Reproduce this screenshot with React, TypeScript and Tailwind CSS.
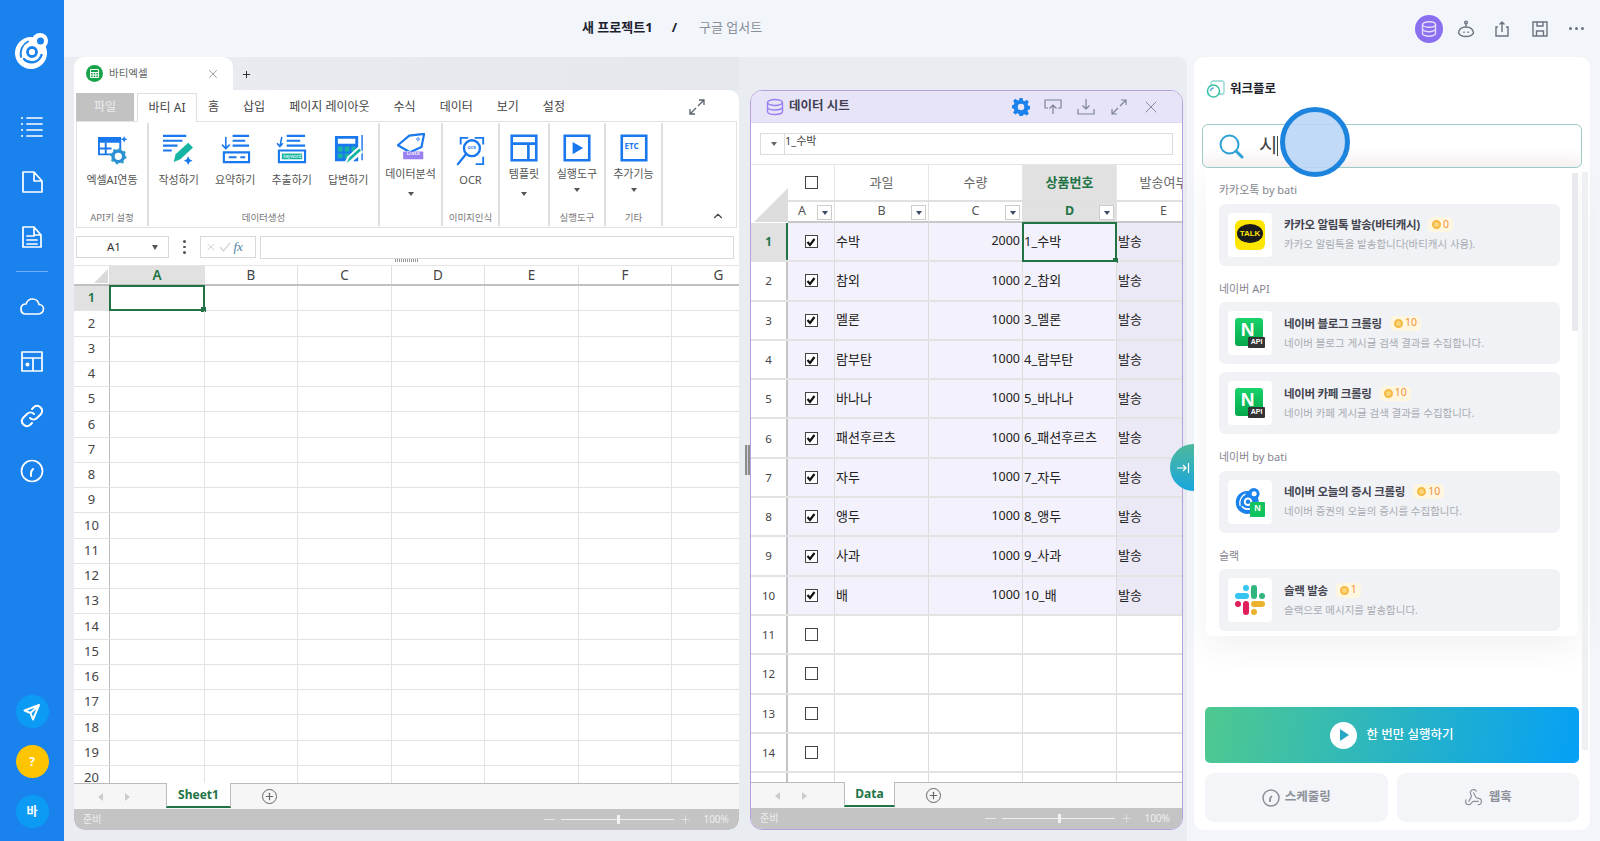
import { ChevronUp, Plus, Webhook, X } from "lucide-react";

const FONT = "font-['Noto_Sans','Noto_Sans_CJK_KR',sans-serif]";

function Logo() {
	return (
		<svg width="36" height="38" viewBox="0 0 36 38" fill="none">
			<circle cx="17" cy="21" r="16" fill="#fff" />
			<circle cx="26" cy="9" r="8" fill="#fff" />
			<circle cx="26.500" cy="9" r="3.500" fill="#1a82ec" />
			<path d="M7 25C5.500 18 9 12 14 9.500" stroke="#1a82ec" strokeWidth="1.800" strokeLinecap="round" />
			<path d="M10 27c5 5.500 15 4 17.500-4" stroke="#1a82ec" strokeWidth="2.400" strokeLinecap="round" />
			<circle cx="18" cy="20" r="4.500" stroke="#1a82ec" strokeWidth="2.800" />
		</svg>
	);
}

function SideIcon({ name }: { name: string }) {
	const p = { width: 26, height: 26, viewBox: "0 0 26 26", fill: "none", stroke: "#fff", strokeWidth: 1.7, strokeLinecap: "round" as const, strokeLinejoin: "round" as const };
	if (name === "list")
		return (
			<svg {...p}>
				<path d="M8 4h15M8 10h15M8 16h15M8 22h15" />
				<path d="M3 4h.1M3 10h.1M3 16h.1M3 22h.1" strokeWidth="2" />
			</svg>
		);
	if (name === "file")
		return (
			<svg {...p}>
				<path d="M4 3h11l8 9v11H4zM15 3v9h8" />
			</svg>
		);
	if (name === "doc")
		return (
			<svg {...p}>
				<path d="M4 3h11l7 8v12H4zM15 3v8h7M8 12h7M8 16h10M8 20h10" />
			</svg>
		);
	if (name === "cloud")
		return (
			<svg {...p}>
				<path d="M7 21c-3 0-5-2-5-5s2-5 5-5c1-3 3.500-5 6.500-5 3.500 0 6 2.500 6.500 5.500 2.500 0 4.500 2 4.500 4.500s-2 5-5 5z" />
			</svg>
		);
	if (name === "layout")
		return (
			<svg {...p}>
				<path d="M3 4h20v19H3zM3 10h20M14 10v13" />
				<circle cx="8.500" cy="16.500" r="1.200" fill="#fff" />
			</svg>
		);
	if (name === "link")
		return (
			<svg {...p} strokeWidth="2">
				<path d="M11 15a5 5 0 0 0 7 0l4-4a5 5 0 0 0-7-7l-2 2" />
				<path d="M15 11a5 5 0 0 0-7 0l-4 4a5 5 0 0 0 7 7l2-2" />
			</svg>
		);
	return (
		<svg {...p}>
			<circle cx="13" cy="13" r="10.500" />
			<path d="M12 18v-3c0-2 1-3 2-4" strokeWidth="2" />
		</svg>
	);
}

function Sidebar() {
	return (
		<aside className="flex h-full w-[64px] shrink-0 flex-col items-center bg-[#1a82ec]">
			<div className="mt-[32px]">
				<Logo />
			</div>
			<div className="mt-[44px] flex flex-col items-center gap-[29px]">
				<SideIcon name="list" />
				<SideIcon name="file" />
				<SideIcon name="doc" />
			</div>
			<div className="mt-[21px] h-px w-[32px] bg-[#6db0f3]" />
			<div className="mt-[21px] flex flex-col items-center gap-[29px]">
				<SideIcon name="cloud" />
				<SideIcon name="layout" />
				<SideIcon name="link" />
				<SideIcon name="gauge" />
			</div>
			<div className="mt-auto mb-[13px] flex flex-col items-center gap-[17px]">
				<div className="flex h-[33px] w-[33px] items-center justify-center rounded-full bg-[#0b9bf5]">
					<svg width="18" height="18" viewBox="0 0 18 18" fill="none" stroke="#fff" strokeWidth="2" strokeLinejoin="round">
						<path d="M16 2 1.500 7.500l6 2.500 2.500 6.500zM7.500 10 16 2" />
					</svg>
				</div>
				<div className="flex h-[33px] w-[33px] items-center justify-center rounded-full bg-[#ffc400] text-[12px] font-bold text-white">?</div>
				<div className="flex h-[33px] w-[33px] items-center justify-center rounded-full bg-[#0b9bf5] text-[12px] font-bold text-white">바</div>
			</div>
		</aside>
	);
}

function TopBar() {
	const stroke = "#6b7280";
	return (
		<header className="flex h-[57px] shrink-0 items-center bg-[#f2f5f9] pl-[518px]">
			<span className="mt-[-2px] text-[13px] font-bold text-[#1c2130]">새 프로젝트1</span>
			<span className="mt-[-2px] ml-[19px] text-[13px] font-bold text-[#1c2130]">/</span>
			<span className="mt-[-2px] ml-[22px] text-[13px] text-[#8a8f99]">구글 업서트</span>
			<div className="ml-[653px] flex items-center">
				<div className="flex h-[28px] w-[28px] items-center justify-center rounded-full bg-[#8a6ff0]">
					<svg width="18" height="18" viewBox="0 0 18 18" fill="none" stroke="#e6defc" strokeWidth="1.400">
						<ellipse cx="9" cy="4.500" rx="6.500" ry="2.800" />
						<path d="M2.500 4.500v9c0 1.500 3 2.800 6.500 2.800s6.500-1.300 6.500-2.800v-9M2.500 9c0 1.500 3 2.800 6.500 2.800s6.500-1.300 6.500-2.800" />
					</svg>
				</div>
				<svg className="ml-[14px]" width="18" height="18" viewBox="0 0 18 18" fill="none" stroke={stroke} strokeWidth="1.400">
					<circle cx="9" cy="2.500" r="1.300" />
					<path d="M9 4v3M1.500 13C2 9 5 7 9 7s7 2 7.500 6c-1 2-4 3.500-7.500 3.500S2.500 15 1.500 13z" />
					<path d="M7 11.500v1.500M11 11.500v1.500" />
				</svg>
				<svg className="ml-[18px]" width="18" height="18" viewBox="0 0 18 18" fill="none" stroke={stroke} strokeWidth="1.400">
					<path d="M5 7H3v9h12V7h-2M9 12V2M6.500 4.500 9 2l2.500 2.500" />
				</svg>
				<svg className="ml-[20px]" width="18" height="18" viewBox="0 0 18 18" fill="none" stroke={stroke} strokeWidth="1.400">
					<path d="M2 2h14v14H2zM6 2v4h6V2M5.500 16v-5h7v5" />
				</svg>
				<div className="ml-[20px] flex gap-[3px]">
					<span className="h-[3px] w-[3px] rounded-full bg-[#6b7280]" />
					<span className="h-[3px] w-[3px] rounded-full bg-[#6b7280]" />
					<span className="h-[3px] w-[3px] rounded-full bg-[#6b7280]" />
				</div>
			</div>
		</header>
	);
}

/* ---- ribbon ---- */
const B = "#1a78ee";
const T = "#16b5a3";

function RibbonIcon({ name, size }: { name: string; size: number }) {
	const p = { width: size, height: size, viewBox: "0 0 32 32", fill: "none" };
	switch (name) {
		case "link":
			return (
				<svg {...p}>
					<path d="M2 4h22v17H2z" stroke={B} strokeWidth="2" />
					<path d="M2 4h22v5H2z" fill={B} />
					<path d="M2 15h13M9 9v12" stroke={B} strokeWidth="2" />
					<circle cx="22" cy="23" r="5.500" stroke="#2c8fd6" strokeWidth="3.500" fill="#fff" />
					<circle cx="22" cy="23" r="7.500" stroke="#2c9fc6" strokeWidth="2" strokeDasharray="2.500 3.400" />
					<path d="M28 2l1 2.500 2.500 1-2.500 1-1 2.500-1-2.500-2.500-1 2.500-1z" fill={B} />
				</svg>
			);
		case "write":
			return (
				<svg {...p}>
					<path d="M0 2h24M0 7h20M0 12h15M0 17h9" stroke={B} strokeWidth="2.200" />
					<path d="M11 29l2-8 13-12 5 5-13 12z" fill={T} />
					<path d="M26 23l1.500 3 3 1.500-3 1.500-1.500 3-1.500-3-3-1.500 3-1.500z" fill={B} />
				</svg>
			);
		case "summary":
			return (
				<svg {...p}>
					<path d="M13 2h17M13 7h13M13 12h17" stroke={B} strokeWidth="2.200" />
					<path d="M6 3v12M2 11l4 4 4-4" stroke={B} strokeWidth="1.600" />
					<path d="M4 19h26v10H4z" stroke={B} strokeWidth="2.200" />
					<path d="M9 24h8M21 24h5" stroke={B} strokeWidth="2.200" />
				</svg>
			);
		case "extract":
			return (
				<svg {...p}>
					<path d="M11 2h19M11 7h14M11 12h19" stroke={B} strokeWidth="2.200" />
					<path d="M6 3 4 13M1 9.500l3 3.500 3-3.500" stroke={B} strokeWidth="1.600" />
					<path d="M3 17h27v12H3z" stroke={B} strokeWidth="2.200" />
					<path d="M6 20h21v6H6z" fill={T} />
				</svg>
			);
		case "answer":
			return (
				<svg {...p}>
					<path d="M2 2h24v26H2z" fill={B} />
					<path d="M5 5h18v5H5z" fill="#fff" />
					<path d="M5 13h5v5H5zM12 13h5v5h-5zM19 13h4v5h-4zM5 20h5v5H5zM12 20h5v5h-5z" fill={T} />
					<path d="M30 1v26" stroke={B} strokeWidth="1.500" />
					<path d="M13 30l3-6 10-9 3.500 3.500-10 9z" fill="#fff" stroke="#fff" strokeWidth="2.500" />
					<path d="M14 30l3-6 10-9 2 2-10 9z" fill={T} />
				</svg>
			);
		case "tag":
			return (
				<svg {...p}>
					<path d="M1 14 14 3l17-2-3 15-13 6z" stroke={B} strokeWidth="2.500" strokeLinejoin="round" />
					<circle cx="24" cy="7" r="1.500" stroke={B} />
					<rect x="7" y="21" width="23" height="9" rx="1" fill="#9a7ff0" />
				</svg>
			);
		case "ocr":
			return (
				<svg {...p}>
					<path d="M5 9V2h8M20 2h9v7M29 22v8h-8" stroke={B} strokeWidth="2" />
					<circle cx="17" cy="13" r="8.500" stroke={B} strokeWidth="2.500" />
					<path d="M11 19 2 30" stroke={B} strokeWidth="2.500" strokeLinecap="round" />
				</svg>
			);
		case "template":
			return (
				<svg {...p}>
					<path d="M2 2h28v28H2zM2 11h28M21 11v19" stroke={B} strokeWidth="3" />
				</svg>
			);
		case "run":
			return (
				<svg {...p}>
					<path d="M2 2h28v28H2z" stroke={B} strokeWidth="3" />
					<path d="M11 9v14l12-7z" fill={B} />
				</svg>
			);
		default:
			return (
				<svg {...p}>
					<path d="M2 2h28v28H2z" stroke={B} strokeWidth="3" />
				</svg>
			);
	}
}

function RibbonButton({ icon, label, caret, pad = "pt-[11px]", size = 31, textGap = "mt-[7px]", caretGap = "mt-[4px]", width = "w-[56.5px]" }: { icon: string; label: string; caret?: boolean; pad?: string; size?: number; textGap?: string; caretGap?: string; width?: string }) {
	return (
		<div className={`relative flex flex-col items-center ${width} ${pad}`}>
			<div className="relative">
				<RibbonIcon name={icon} size={size} />
				{icon === "ocr" && <span className="absolute top-[9px] left-[12px] text-[4px] font-bold text-[#1a78ee]">OCR</span>}
				{icon === "tag" && <span className="absolute top-[15px] left-[10px] text-[6px] leading-[10px] text-white">Data</span>}
				{icon === "extract" && <span className="absolute top-[18px] left-[7px] text-[4.500px] leading-[8px] text-white">keyword</span>}
				{icon === "etc" && <span className="absolute top-[6px] left-[5px] text-[8px] font-bold text-[#1a78ee]">ETC</span>}
			</div>
			<span className={`whitespace-nowrap text-[11px] text-[#555] ${textGap}`}>{label}</span>
			{caret && <span className={`h-0 w-0 border-x-[3px] border-t-[4px] border-x-transparent border-t-[#555] ${caretGap}`} />}
		</div>
	);
}

function RibbonGroup({ label, width, children }: { label?: string; width: string; children: React.ReactNode }) {
	return (
		<div className={`relative flex h-full shrink-0 flex-col border-r-2 border-[#dedede] ${width}`}>
			<div className="flex flex-1 justify-center">{children}</div>
			<div className="h-[16px] text-center text-[9.500px] leading-[16px] text-[#777]">{label}</div>
		</div>
	);
}

function Ribbon() {
	return (
		<>
			<div className="flex h-[31px] shrink-0 items-end pl-[2px] text-[12px] text-[#444]">
				<div className="flex h-[28px] w-[58px] items-center justify-center bg-[#c2c2c2] text-[#eee]">파일</div>
				<div className="z-10 ml-[3px] flex h-[29px] w-[60px] translate-y-px items-center justify-center border-x border-t border-[#dedede] bg-white">바티 AI</div>
				<span className="mb-[5px] ml-[11px]">홈</span>
				<span className="mb-[5px] ml-[24px]">삽입</span>
				<span className="mb-[5px] ml-[24px]">페이지 레이아웃</span>
				<span className="mb-[5px] ml-[24px]">수식</span>
				<span className="mb-[5px] ml-[24px]">데이터</span>
				<span className="mb-[5px] ml-[24px]">보기</span>
				<span className="mb-[5px] ml-[24px]">설정</span>
				<svg className="mb-[6px] ml-[124px]" width="16" height="16" viewBox="0 0 16 16" fill="none" stroke="#5b6370" strokeWidth="1.300">
					<path d="M9 7l6-6M10 1h5v5M7 9l-6 6M1 10v5h5" />
				</svg>
			</div>
			<div className="relative mx-[2px] flex h-[107px] shrink-0 border border-[#e2e2e2] pt-px pb-px">
				<RibbonGroup label="API키 설정" width="w-[72px]">
					<RibbonButton icon="link" label="엑셀AI연동" width="w-[72px]" />
				</RibbonGroup>
				<RibbonGroup label="데이터생성" width="w-[231px]">
					<RibbonButton icon="write" label="작성하기" />
					<RibbonButton icon="summary" label="요약하기" />
					<RibbonButton icon="extract" label="추출하기" />
					<RibbonButton icon="answer" label="답변하기" />
				</RibbonGroup>
				<RibbonGroup width="w-[63px]">
					<RibbonButton icon="tag" label="데이터분석" caret pad="pt-[10px]" size={28} textGap="mt-[5px]" caretGap="mt-[9px]" width="w-[60px]" />
				</RibbonGroup>
				<RibbonGroup label="이미지인식" width="w-[57px]">
					<RibbonButton icon="ocr" label="OCR" pad="pt-[13px]" size={30} textGap="mt-[6px]" width="w-[57px]" />
				</RibbonGroup>
				<RibbonGroup width="w-[50px]">
					<RibbonButton icon="template" label="템플릿" caret pad="pt-[11px]" size={28} textGap="mt-[4px]" caretGap="mt-[9px]" width="w-[50px]" />
				</RibbonGroup>
				<RibbonGroup label="실행도구" width="w-[56px]">
					<RibbonButton icon="run" label="실행도구" caret pad="pt-[11px]" size={28} textGap="mt-[4px]" caretGap="mt-[5px]" width="w-[56px]" />
				</RibbonGroup>
				<RibbonGroup label="기타" width="w-[57px]">
					<RibbonButton icon="etc" label="추가기능" caret pad="pt-[11px]" size={28} textGap="mt-[4px]" caretGap="mt-[5px]" width="w-[57px]" />
				</RibbonGroup>
				<ChevronUp className="absolute right-[11px] bottom-[4px] text-[#444]" size={14} />
			</div>
		</>
	);
}

function FormulaBar() {
	return (
		<div className="relative flex h-[37px] shrink-0 items-center pl-[2px] pt-[1px]">
			<div className="flex h-[22px] w-[93px] items-center border border-[#d9d9d9] pl-[30px] text-[11.500px] text-[#333]">
				A1
				<span className="ml-[31px] h-0 w-0 border-x-[3.500px] border-t-[5px] border-x-transparent border-t-[#555]" />
			</div>
			<div className="ml-[14px] flex flex-col gap-[3px]">
				<span className="h-[2.500px] w-[2.500px] rounded-full bg-[#555]" />
				<span className="h-[2.500px] w-[2.500px] rounded-full bg-[#555]" />
				<span className="h-[2.500px] w-[2.500px] rounded-full bg-[#555]" />
			</div>
			<div className="ml-[14px] flex h-[22px] w-[56px] items-center border border-[#d9d9d9] pl-[4px] text-[#d4d4d4]">
				<X size={12} />
				<svg className="ml-[2px]" width="12" height="12" viewBox="0 0 12 12" fill="none" stroke="#d4d4d4" strokeWidth="1.200">
					<path d="M1 6l3.500 4L11 2" />
				</svg>
				<i className="ml-[3px] font-['Liberation_Serif',serif] text-[13px] text-[#4f7f9f]">fx</i>
			</div>
			<div className="ml-[4px] h-[23px] w-[474px] border border-[#d9d9d9]" />
			<div className="absolute bottom-[3px] left-[321px] h-[3px] w-[23px] bg-[repeating-linear-gradient(90deg,#999_0,#999_1px,transparent_1px,transparent_2px)]" />
		</div>
	);
}

/* ---- sheet ---- */
const LEFT_COLS = [
	["A", "w-[95px]"],
	["B", "w-[93px]"],
	["C", "w-[94px]"],
	["D", "w-[93px]"],
	["E", "w-[94px]"],
	["F", "w-[93px]"],
	["G", "w-[94px]"],
];

function LeftGrid() {
	const rows = Array.from({ length: 20 }, (_, i) => i + 1);
	return (
		<div className="min-h-0 flex-1 overflow-hidden border-t border-[#e5e5e5]">
			<div className="flex h-[20px] w-[720px] border-b-2 border-[#c0c0c0]">
				<div className="relative w-[36px] shrink-0 border-r border-[#ddd]">
					<div className="absolute right-[1px] bottom-[1px] h-0 w-0 border-b-[14px] border-l-[14px] border-b-[#d9d9d9] border-l-transparent" />
				</div>
				{LEFT_COLS.map(([c, w], i) => (
					<div key={c} className={`flex shrink-0 items-center justify-center border-r border-[#e0e0e0] text-[13.500px] ${w} ${i === 0 ? "bg-[#e1e1e1] font-semibold text-[#217346]" : "text-[#444]"}`}>
						{c}
					</div>
				))}
			</div>
			{rows.map((r) => (
				<div key={r} className="flex h-[25.250px] w-[720px] border-b border-[#e3e3e3]">
					<div className={`flex w-[36px] shrink-0 items-center justify-center border-r border-[#bbb] text-[13px] ${r === 1 ? "bg-[#e1e1e1] font-semibold text-[#217346]" : "text-[#444]"}`}>{r}</div>
					{LEFT_COLS.map(([c, w], i) => (
						<div key={c} className={`relative shrink-0 border-r border-[#e3e3e3] ${w}`}>
							{r === 1 && i === 0 && (
								<div className="absolute -top-px -left-px right-[-1px] bottom-[-1px] border-2 border-[#217346]">
									<span className="absolute -right-[3px] -bottom-[3px] h-[5px] w-[5px] bg-[#217346]" />
								</div>
							)}
						</div>
					))}
				</div>
			))}
		</div>
	);
}

function SheetTabs({ name, tabWidth, offset, plus }: { name: string; tabWidth: string; offset: string; plus: string }) {
	return (
		<div className="flex h-[26px] shrink-0 items-center border-t border-[#bbb] bg-[#f6f6f6]">
			<span className="ml-[24px] h-0 w-0 border-y-[4px] border-r-[5px] border-y-transparent border-r-[#ccc]" />
			<span className="ml-[22px] h-0 w-0 border-y-[4px] border-l-[5px] border-y-transparent border-l-[#ccc]" />
			<div className={`-mt-px flex h-[25px] items-center justify-center self-start border-x border-b-2 border-x-[#bbb] border-b-[#217346] bg-white text-[12px] font-bold text-[#217346] ${tabWidth} ${offset}`}>{name}</div>
			<div className={`flex h-[15px] w-[15px] items-center justify-center rounded-full border-[1.500px] border-[#666] ${plus}`}>
				<Plus size={11} strokeWidth={2.500} className="text-[#666]" />
			</div>
		</div>
	);
}

function StatusBar({ sliderGap, rounded }: { sliderGap: string; rounded: string }) {
	return (
		<div className={`flex h-[21px] shrink-0 items-center whitespace-nowrap bg-[#c4c4c4] pl-[9px] text-[10px] text-[#efefef] ${rounded}`}>
			<span>준비</span>
			<span className={`h-px w-[11px] bg-[#e8e8e8] ${sliderGap}`} />
			<div className="relative ml-[6px] h-px w-[113px] shrink-0 bg-[#eee]">
				<span className="absolute top-[-4px] left-[56px] h-[9px] w-[3px] bg-[#f2f2f2]" />
			</div>
			<Plus size={13} strokeWidth={1} className="ml-[5px] shrink-0 text-[#f2f2f2]" />
			<span className="ml-[11px]">100%</span>
		</div>
	);
}

function ExcelPanel() {
	return (
		<section className="flex h-full w-[665px] shrink-0 flex-col">
			<div className="flex h-[33px] shrink-0 bg-[linear-gradient(90deg,#e9ecf1,#e4e7ec)]">
				<div className="flex w-[159px] items-center rounded-t-[10px] bg-white pl-[12px]">
					<div className="flex h-[17px] w-[17px] items-center justify-center rounded-full bg-[#16a34a]">
						<svg width="9" height="9" viewBox="0 0 9 9" fill="none" stroke="#fff" strokeWidth="1">
							<path d="M.5.500h8v8h-8zM.5 3.500h8M.5 6h8M3.200 3.500v5M5.800 3.500v5" />
						</svg>
					</div>
					<span className="ml-[6px] text-[10.500px] text-[#666]">바티엑셀</span>
					<X size={14} strokeWidth={1.200} className="ml-[58px] text-[#777]" />
				</div>
				<Plus size={11} strokeWidth={2} className="mt-[12px] ml-[8px] text-[#222]" />
			</div>
			<div className="flex min-h-0 flex-1 flex-col overflow-hidden rounded-tr-[10px] rounded-b-[10px] bg-white">
				<Ribbon />
				<FormulaBar />
				<LeftGrid />
				<SheetTabs name="Sheet1" tabWidth="w-[65px]" offset="ml-[36px]" plus="ml-[31px]" />
				<StatusBar sliderGap="ml-[443px]" rounded="rounded-b-[10px]" />
			</div>
		</section>
	);
}

const FRUITS = ["수박", "참외", "멜론", "람부탄", "바나나", "패션후르츠", "자두", "앵두", "사과", "배"];

function CheckBox({ checked }: { checked?: boolean }) {
	return (
		<span className="flex h-[13px] w-[13px] items-center justify-center border-[1.500px] border-[#444] bg-white">
			{checked && (
				<svg width="10" height="10" viewBox="0 0 10 10" fill="none" stroke="#111" strokeWidth="2.200">
					<path d="M1.500 5l2.500 3 4.500-6" />
				</svg>
			)}
		</span>
	);
}

const DATA_COLS = [
	{ key: "A", title: "", w: "w-[47px]" },
	{ key: "B", title: "과일", w: "w-[94px]" },
	{ key: "C", title: "수량", w: "w-[94px]" },
	{ key: "D", title: "상품번호", w: "w-[94px]" },
	{ key: "E", title: "발송여부", w: "w-[94px]" },
];

function FilterButton() {
	return (
		<span className="absolute top-[3px] right-[2px] flex h-[15px] w-[15px] items-center justify-center border border-[#ccc] bg-white">
			<span className="h-0 w-0 border-x-[3.500px] border-t-[4px] border-x-transparent border-t-[#3d4a63]" />
		</span>
	);
}

function DataGrid() {
	const rows = Array.from({ length: 15 }, (_, i) => i + 1);
	return (
		<div className="min-h-0 flex-1 overflow-hidden">
			<div className="flex h-[59px] w-[500px] border-t border-[#e5e5e5]">
				<div className="relative h-full w-[37px] shrink-0">
					<div className="absolute right-0 bottom-[1px] h-0 w-0 border-b-[34px] border-l-[34px] border-b-[#dcdcdc] border-l-transparent" />
				</div>
				{DATA_COLS.map((c) => (
					<div key={c.key} className={`flex shrink-0 flex-col ${c.w}`}>
						<div className={`flex h-[36px] items-center justify-center border-r border-[#e8e8e8] text-[13px] ${c.key === "D" ? "bg-[#e1e1e1] font-bold text-[#217346]" : "text-[#666]"}`}>
							{c.key === "A" ? <CheckBox /> : c.title}
						</div>
						<div className={`relative flex flex-1 items-center border-t-2 border-b-2 border-t-[#e0e0e0] border-b-[#c8c8c8] border-r border-r-[#e0e0e0] text-[12.500px] ${c.key === "A" ? "pl-[10px]" : "justify-center"} ${c.key === "D" ? "bg-[#e1e1e1] font-bold text-[#217346]" : "text-[#555]"}`}>
							{c.key}
							{c.key !== "E" && <FilterButton />}
						</div>
					</div>
				))}
			</div>
			{rows.map((r) => {
				const name = FRUITS[r - 1];
				const fill = name ? "bg-[#f3f1fb]" : "";
				return (
					<div key={r} className="flex h-[39.300px] w-[500px] border-b-2 border-[#e3e3e3]">
						<div className={`flex w-[37px] shrink-0 items-center justify-center border-r-2 text-[11.500px] ${r === 1 ? "border-r-[#217346] bg-[#e1e1e1] font-bold text-[#217346]" : "border-r-[#c4c4c4] text-[#444]"}`}>{r}</div>
						<div className={`flex w-[47px] shrink-0 items-center justify-center border-r border-[#dcdcdc] ${fill}`}>{r < 15 && <CheckBox checked={!!name} />}</div>
						<div className={`flex w-[94px] shrink-0 items-center border-r border-[#dcdcdc] pl-px text-[13px] text-[#222] ${fill}`}>{name}</div>
						<div className={`flex w-[94px] shrink-0 items-center justify-end border-r border-[#dcdcdc] pr-[2px] text-[12.500px] text-[#222] ${fill}`}>{name ? (r === 1 ? 2000 : 1000) : ""}</div>
						<div className={`relative flex w-[94px] shrink-0 items-center border-r border-[#dcdcdc] pl-px text-[13px] text-[#222] ${fill}`}>
							{name ? `${r}_${name}` : ""}
							{r === 1 && (
								<div className="absolute -top-px -left-px right-[-1px] bottom-[-2px] border-2 border-[#217346]">
									<span className="absolute -right-[3px] -bottom-[3px] h-[5px] w-[5px] bg-[#217346]" />
								</div>
							)}
						</div>
						<div className={`flex w-[94px] shrink-0 items-center pl-px text-[13px] text-[#222] ${name ? "bg-[#ebe9f5]" : ""}`}>{name ? "발송" : ""}</div>
					</div>
				);
			})}
		</div>
	);
}

function DataPanel() {
	const s = "#7a8494";
	return (
		<section className="mt-[33px] flex h-[calc(100%-33px)] w-[433px] shrink-0 flex-col overflow-hidden rounded-[12px] border border-[#b79fe0] bg-white">
			<div className="flex h-[32px] shrink-0 items-center border-b border-[#ded9ef] bg-[#e8e4f8] pl-[15px]">
				<svg width="18" height="18" viewBox="0 0 18 18" fill="none" stroke="#9a7ff0" strokeWidth="1.400">
					<ellipse cx="9" cy="4.500" rx="7.500" ry="3" />
					<path d="M1.500 4.500v9c0 1.700 3.400 3 7.500 3s7.500-1.300 7.500-3v-9M1.500 9c0 1.700 3.400 3 7.500 3s7.500-1.300 7.500-3" />
				</svg>
				<span className="ml-[5px] text-[12.500px] font-bold text-[#3f3f52]">데이터 시트</span>
				<svg className="ml-[162px]" width="18" height="18" viewBox="0 0 18 18" fill="#1a82ec">
					<path fillRule="evenodd" d="M7.500 0h3l.5 2.500 1.600.7 2.200-1.400 2.100 2.100-1.400 2.200.7 1.600 2.300.5v3l-2.300.5-.7 1.600 1.400 2.200-2.100 2.100-2.200-1.400-1.600.7-.5 2.600h-3L7 15.900l-1.600-.7-2.200 1.400-2.100-2.100 1.400-2.200-.7-1.600L0 10.200v-3l1.800-.5.7-1.600-1.400-2.200 2.100-2.100 2.200 1.400L7 2.500zM9 5.700a3.300 3.300 0 1 0 0 6.600 3.300 3.300 0 0 0 0-6.600z" />
				</svg>
				<svg className="ml-[14px]" width="18" height="18" viewBox="0 0 18 18" fill="none" stroke={s} strokeWidth="1.200">
					<path d="M4 10H1V2h16v8h-3M9 16V7M5.500 10.500 9 7l3.500 3.500" />
				</svg>
				<svg className="ml-[15px]" width="18" height="18" viewBox="0 0 18 18" fill="none" stroke={s} strokeWidth="1.200">
					<path d="M1 11v5h16v-5M9 1v10M5.500 7.500 9 11l3.500-3.500" />
				</svg>
				<svg className="ml-[16px]" width="16" height="16" viewBox="0 0 16 16" fill="none" stroke={s} strokeWidth="1.200">
					<path d="M9 7l6-6M10 1h5v5M7 9l-6 6M1 10v5h5" />
				</svg>
				<X size={20} strokeWidth={1.100} className="ml-[14px] text-[#7a8494]" />
			</div>
			<div className="flex h-[41px] shrink-0 items-center pl-[9px]">
				<div className="flex h-[22px] w-[413px] items-center border border-[#dcdcdc]">
					<span className="flex h-full w-[24px] items-center justify-center border-r border-[#dcdcdc] pl-[2px]">
						<span className="h-0 w-0 border-x-[3px] border-t-[4px] border-x-transparent border-t-[#666]" />
					</span>
					<span className="-mt-[4px] text-[11px] text-[#444]">1_수박</span>
				</div>
			</div>
			<DataGrid />
			<SheetTabs name="Data" tabWidth="w-[51px]" offset="ml-[37px]" plus="ml-[31px]" />
			<StatusBar sliderGap="ml-[207px]" rounded="" />
		</section>
	);
}

/* ---- workflow panel ---- */
function Coin({ value }: { value: number }) {
	return (
		<span className="ml-[8px] flex h-[15px] items-center gap-[2px] rounded-[5px] bg-[#fff6e0] px-[4px] text-[10.500px] text-[#f0913a]">
			<span className="flex h-[9px] w-[9px] items-center justify-center rounded-full border-[2px] border-[#f5b942] bg-[#fcd67a]" />
			{value}
		</span>
	);
}

function TalkIcon() {
	return (
		<div className="relative flex h-[30px] w-[30px] items-center justify-center rounded-[6px] bg-[#fee500]">
			<div className="mt-[-2px] flex h-[19px] w-[26px] items-center justify-center rounded-[50%] bg-[#1a1a1a] font-['Liberation_Sans',sans-serif] text-[8px] font-bold text-[#fee500]">TALK</div>
		</div>
	);
}

function NaverIcon() {
	return (
		<div className="relative h-[30px] w-[30px]">
			<div className="flex h-[28px] w-[28px] items-center justify-center rounded-[3px] bg-[linear-gradient(180deg,#18d36a,#05a84b)] pr-[3px] pb-[4px] font-['Liberation_Sans',sans-serif] text-[19px] font-bold text-white">N</div>
			<div className="absolute right-0 bottom-0 flex h-[11px] w-[17px] items-center justify-center rounded-[1px] bg-[#333] font-['Liberation_Sans',sans-serif] text-[7px] font-bold text-white">API</div>
		</div>
	);
}

function BatiNaverIcon() {
	return (
		<div className="relative h-[30px] w-[30px]">
			<svg width="26" height="28" viewBox="0 0 36 38" fill="none">
				<circle cx="17" cy="21" r="16" fill="#1a82ec" />
				<circle cx="26" cy="9" r="8" fill="#1a82ec" />
				<circle cx="26.500" cy="9" r="3.500" fill="#fff" />
				<path d="M7 25C5.500 18 9 12 14 9.500" stroke="#fff" strokeWidth="1.800" strokeLinecap="round" />
				<path d="M10 27c5 5.500 15 4 17.500-4" stroke="#fff" strokeWidth="2.400" strokeLinecap="round" />
				<circle cx="18" cy="20" r="4.500" stroke="#fff" strokeWidth="2.800" />
			</svg>
			<div className="absolute right-0 bottom-0 flex h-[15px] w-[15px] items-center justify-center rounded-[1px] bg-[#10c35f] font-['Liberation_Sans',sans-serif] text-[9px] font-bold text-white">N</div>
		</div>
	);
}

function SlackIcon() {
	return (
		<svg width="30" height="30" viewBox="0 0 30 30">
			<rect x="0" y="8" width="14" height="6" rx="3" fill="#36c5f0" />
			<circle cx="11" cy="3" r="3" fill="#36c5f0" />
			<rect x="16" y="0" width="6" height="14" rx="3" fill="#2eb67d" />
			<circle cx="27" cy="11" r="3" fill="#2eb67d" />
			<rect x="16" y="16" width="14" height="6" rx="3" fill="#ecb22e" />
			<circle cx="19" cy="27" r="3" fill="#ecb22e" />
			<rect x="8" y="16" width="6" height="14" rx="3" fill="#e01e5a" />
			<circle cx="3" cy="19" r="3" fill="#e01e5a" />
		</svg>
	);
}

function FlowItem({ icon, title, desc, coin }: { icon: React.ReactNode; title: string; desc: string; coin: number }) {
	return (
		<div className="flex h-[62px] shrink-0 items-center rounded-[6px] bg-[#f0f2f5] pl-[9px]">
			<div className="flex h-[44px] w-[44px] items-center justify-center rounded-[4px] bg-white">{icon}</div>
			<div className="ml-[12px]">
				<div className="flex items-center">
					<span className="text-[11.500px] font-bold tracking-[-0.300px] text-[#444450]">{title}</span>
					<Coin value={coin} />
				</div>
				<div className="mt-[4px] text-[10.500px] text-[#a9abb3]">{desc}</div>
			</div>
		</div>
	);
}

function GroupLabel({ children }: { children: React.ReactNode }) {
	return <div className="mb-[5px] text-[11px] text-[#85858f]">{children}</div>;
}

function WorkflowPanel() {
	return (
		<section className="relative ml-[11px] flex h-full w-[396px] shrink-0 flex-col rounded-[10px] bg-white">
			<div className="flex h-[67px] shrink-0 items-center pb-[2px] pl-[12px]">
				<svg width="19" height="19" viewBox="0 0 19 19" fill="none" strokeWidth="1.300">
					<rect x="5" y="1" width="13" height="13" rx="2" stroke="#8fd6cf" />
					<circle cx="7.500" cy="11" r="6" fill="#fff" stroke="#3cc2a6" strokeWidth="1.600" />
					<path d="M4.500 11a3 3 0 0 1 3-3" stroke="#3f9fd8" />
				</svg>
				<span className="ml-[5px] text-[12.500px] font-bold text-[#1f1f2a]">워크플로</span>
			</div>
			<div className="mx-[8px] flex h-[44px] shrink-0 items-center rounded-[6px] border border-[#9fcbc8] bg-[linear-gradient(180deg,#ffffff_55%,#f6f1f2)] pl-[16px]">
				<svg width="25" height="25" viewBox="0 0 25 25" fill="none" stroke="#2ea0d8" strokeWidth="2">
					<circle cx="10.500" cy="10.500" r="9" />
					<path d="m17 17 6 6" strokeWidth="3" strokeLinecap="round" />
				</svg>
				<span className="ml-[15px] text-[20px] leading-none text-[#444]">시</span>
				<span className="h-[20px] w-px bg-[#444]" />
			</div>
			<div className="relative mx-[12px] flex h-[468px] shrink-0 flex-col overflow-hidden rounded-b-[6px] bg-white pt-[14px] pr-[18px] pl-[13px] shadow-[0_12px_30px_rgba(60,70,90,0.07)]">
				<GroupLabel>카카오톡 by bati</GroupLabel>
				<FlowItem icon={<TalkIcon />} title="카카오 알림톡 발송(바티캐시)" desc="카카오 알림톡을 발송합니다(바티캐시 사용)." coin={0} />
				<div className="mt-[15px]" />
				<GroupLabel>네이버 API</GroupLabel>
				<FlowItem icon={<NaverIcon />} title="네이버 블로그 크롤링" desc="네이버 블로그 게시글 검색 결과를 수집합니다." coin={10} />
				<div className="mt-[8px]" />
				<FlowItem icon={<NaverIcon />} title="네이버 카페 크롤링" desc="네이버 카페 게시글 검색 결과를 수집합니다." coin={10} />
				<div className="mt-[15px]" />
				<GroupLabel>네이버 by bati</GroupLabel>
				<FlowItem icon={<BatiNaverIcon />} title="네이버 오늘의 증시 크롤링" desc="네이버 증권의 오늘의 증시를 수집합니다." coin={10} />
				<div className="mt-[15px]" />
				<GroupLabel>슬랙</GroupLabel>
				<FlowItem icon={<SlackIcon />} title="슬랙 발송" desc="슬랙으로 메시지를 발송합니다." coin={1} />
				<div className="absolute top-[5px] right-0 h-[158px] w-[6px] bg-[#e9eaef]" />
			</div>
			<div className="absolute top-[115px] right-[2px] h-[578px] w-[6px] bg-[#eef0f3]" />
			<div className="mx-[11px] mt-auto flex h-[56px] shrink-0 items-center justify-center rounded-[5px] bg-[linear-gradient(100deg,#4fc98f,#05a0f6)]">
				<span className="flex h-[27px] w-[27px] items-center justify-center rounded-full bg-white">
					<span className="ml-[2px] h-0 w-0 border-y-[6px] border-l-[9px] border-y-transparent border-l-[#26a7c6]" />
				</span>
				<span className="ml-[9px] text-[12.500px] font-medium text-white">한 번만 실행하기</span>
			</div>
			<div className="mx-[11px] mt-[10px] mb-[8px] flex h-[49px] shrink-0 gap-[9px] text-[12.500px] font-bold text-[#8d909a]">
				<div className="flex flex-1 items-center justify-center rounded-[9px] bg-[#f3f5f9]">
					<svg width="18" height="18" viewBox="0 0 18 18" fill="none" stroke="#8d909a" strokeWidth="1.500">
						<circle cx="9" cy="9" r="8" />
						<path d="M8 13v-2c0-2 .5-3 2-4" strokeWidth="1.800" />
					</svg>
					<span className="ml-[5px]">스케줄링</span>
				</div>
				<div className="flex flex-1 items-center justify-center rounded-[9px] bg-[#f3f5f9]">
					<Webhook size={19} strokeWidth={1.500} className="text-[#8d909a]" />
					<span className="ml-[6px]">웹훅</span>
				</div>
			</div>
			{/* cursor highlight */}
			<div className="absolute top-[50px] left-[86px] h-[70px] w-[70px] rounded-full border-[5px] border-[#1d84de] bg-[#b9d6f6]/90" />
			{/* collapse handle */}
			<div className="absolute top-[387px] left-[-24px] z-20 flex h-[47px] w-[24px] items-center rounded-l-full bg-[linear-gradient(180deg,#4fb89c,#18a6de)] pl-[6px]">
				<svg width="14" height="12" viewBox="0 0 14 12" fill="none" stroke="#fff" strokeWidth="1.200">
					<path d="M1 6h9M7 3l3 3-3 3M12.500 1v10" />
				</svg>
			</div>
		</section>
	);
}

export default function App() {
	return (
		<div className={`flex h-[841px] w-[1600px] overflow-hidden bg-[#f2f5f9] ${FONT}`}>
			<Sidebar />
			<main className="flex min-w-0 flex-1 flex-col">
				<TopBar />
				<div className="relative z-0 flex min-h-0 flex-1 pb-[11px]">
					<div className="absolute top-0 left-0 -z-10 h-[calc(100%+11px)] w-[1123px] rounded-tr-[8px] bg-[#e9edf2]" />
					<div className="ml-[10px]">
						<ExcelPanel />
					</div>
					<div className="ml-[6px] mt-[388px] h-[30px] w-[5px] bg-[repeating-linear-gradient(90deg,#8c8c8c_0,#8c8c8c_2px,#d0d0d0_2px,#d0d0d0_3px)]" />
					<DataPanel />
					<WorkflowPanel />
				</div>
			</main>
		</div>
	);
}
